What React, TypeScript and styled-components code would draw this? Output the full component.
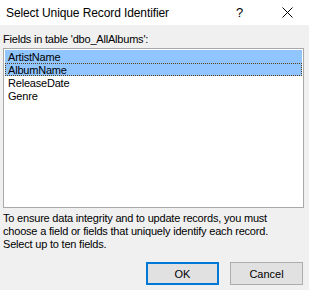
import styled, { createGlobalStyle } from 'styled-components';

const fields = ['ArtistName', 'AlbumName', 'ReleaseDate', 'Genre'];
const selected = ['ArtistName', 'AlbumName'];
const focused = 'AlbumName';

const GlobalStyle = createGlobalStyle`
  html, body {
    margin: 0;
    padding: 0;
    background: #f0f0f0;
  }
  * {
    box-sizing: border-box;
  }
`;

const App = () => {
  return (
    <>
      <GlobalStyle />
      <Dialog>
        <TitleBar>
          <Title>Select Unique Record Identifier</Title>
          <HelpButton>?</HelpButton>
          <CloseButton>
            <svg width="11" height="11" viewBox="0 0 11 11">
              <path d="M0.5 0.5 L10.5 10.5 M10.5 0.5 L0.5 10.5" stroke="#000" strokeWidth="1" fill="none" />
            </svg>
          </CloseButton>
        </TitleBar>
        <Body>
          <Label>Fields in table 'dbo_AllAlbums':</Label>
          <ListBox>
            {fields.map((field) => (
              <Item
                key={field}
                $selected={selected.includes(field)}
                $focused={field === focused}
              >
                {field}
              </Item>
            ))}
          </ListBox>
          <Description>
            To ensure data integrity and to update records, you must
            <br />
            choose a field or fields that uniquely identify each record.
            <br />
            Select up to ten fields.
          </Description>
          <ButtonRow>
            <Button $default>OK</Button>
            <Button>Cancel</Button>
          </ButtonRow>
        </Body>
      </Dialog>
    </>
  );
};

export default App;

// Styled Components
const Dialog = styled.div`
  width: 309px;
  height: 290px;
  display: flex;
  flex-direction: column;
  background: #f0f0f0;
  font-family: 'Liberation Sans', Arial, sans-serif;
  color: #000;
`;

const TitleBar = styled.div`
  height: 25px;
  display: flex;
  align-items: center;
  background: #ffffff;
  padding-left: 6px;
`;

const Title = styled.span`
  flex: 1;
  font-size: 12px;
  letter-spacing: -0.1px;
`;

const HelpButton = styled.span`
  width: 14px;
  font-size: 13px;
  margin-right: 32px;
`;

const CloseButton = styled.span`
  width: 11px;
  height: 11px;
  display: flex;
  margin-right: 16px;
`;

const Body = styled.div`
  flex: 1;
  display: flex;
  flex-direction: column;
  padding: 0 5px 0 3px;
  font-size: 11px;
  letter-spacing: -0.2px;
`;

const Label = styled.div`
  margin-top: 8px;
  line-height: 13px;
  height: 13px;
`;

const ListBox = styled.div`
  margin-top: 2px;
  height: 160px;
  background: #ffffff;
  border: 1px solid #a9a9a9;
  padding: 1px;
  display: flex;
  flex-direction: column;
`;

const Item = styled.div<{ $selected?: boolean; $focused?: boolean }>`
  height: 13px;
  line-height: 12px;
  padding-left: 2px;
  background: ${(p) => (p.$selected ? '#91c5ff' : 'transparent')};
  border: 1px ${(p) => (p.$focused ? 'dotted #5a3c1e' : 'solid transparent')};
`;

const Description = styled.div`
  margin-top: 4px;
  line-height: 13px;
`;

const ButtonRow = styled.div`
  margin-top: 11px;
  display: flex;
  justify-content: flex-end;
  gap: 11px;
  padding-right: 1px;
`;

const Button = styled.button<{ $default?: boolean }>`
  width: 73px;
  height: 23px;
  padding: 0;
  font-family: 'Liberation Sans', Arial, sans-serif;
  font-size: 11px;
  color: #000;
  background: #e1e1e1;
  border: ${(p) => (p.$default ? '2px solid #0078d7' : '1px solid #adadad')};
`;
